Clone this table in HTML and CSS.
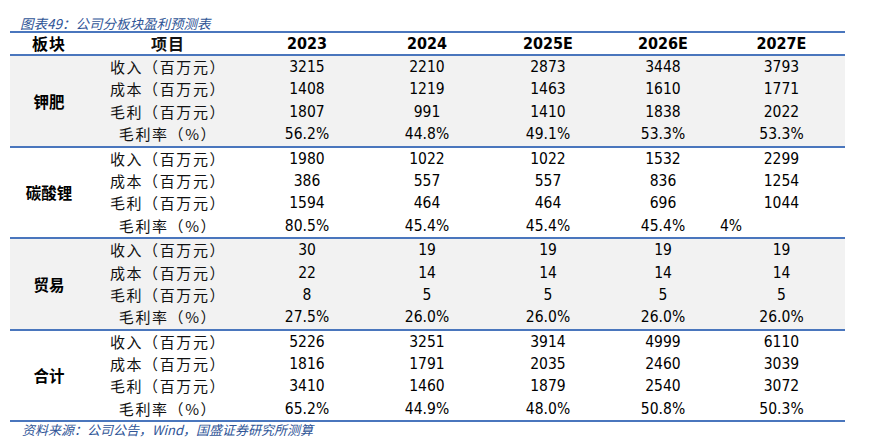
FILE: index.html
```html
<!DOCTYPE html>
<html lang="zh-CN">
<head>
<meta charset="utf-8">
<title>公司分板块盈利预测表</title>
<link rel="stylesheet" href="styles.css">
</head>
<body>
<div class="page">
  <div class="title">图表49：公司分板块盈利预测表</div>
  <div class="tbl">
    <div class="row head">
      <div class="c seg">板块</div>
      <div class="c lab">项目</div>
      <div class="c">2023</div>
      <div class="c">2024</div>
      <div class="c">2025E</div>
      <div class="c">2026E</div>
      <div class="c">2027E</div>
    </div>

    <div class="group shade">
      <div class="segname">钾肥</div>
      <div class="c lab">收入（百万元）</div><div class="c">3215</div><div class="c">2210</div><div class="c">2873</div><div class="c">3448</div><div class="c">3793</div>
      <div class="c lab">成本（百万元）</div><div class="c">1408</div><div class="c">1219</div><div class="c">1463</div><div class="c">1610</div><div class="c">1771</div>
      <div class="c lab">毛利（百万元）</div><div class="c">1807</div><div class="c">991</div><div class="c">1410</div><div class="c">1838</div><div class="c">2022</div>
      <div class="c lab">毛利率（%）</div><div class="c">56.2%</div><div class="c">44.8%</div><div class="c">49.1%</div><div class="c">53.3%</div><div class="c">53.3%</div>
    </div>

    <div class="group">
      <div class="segname">碳酸锂</div>
      <div class="c lab">收入（百万元）</div><div class="c">1980</div><div class="c">1022</div><div class="c">1022</div><div class="c">1532</div><div class="c">2299</div>
      <div class="c lab">成本（百万元）</div><div class="c">386</div><div class="c">557</div><div class="c">557</div><div class="c">836</div><div class="c">1254</div>
      <div class="c lab">毛利（百万元）</div><div class="c">1594</div><div class="c">464</div><div class="c">464</div><div class="c">696</div><div class="c">1044</div>
      <div class="c lab">毛利率（%）</div><div class="c">80.5%</div><div class="c">45.4%</div><div class="c">45.4%</div><div class="c">45.4%</div><div class="c left">4%</div>
    </div>

    <div class="group shade">
      <div class="segname">贸易</div>
      <div class="c lab">收入（百万元）</div><div class="c">30</div><div class="c">19</div><div class="c">19</div><div class="c">19</div><div class="c">19</div>
      <div class="c lab">成本（百万元）</div><div class="c">22</div><div class="c">14</div><div class="c">14</div><div class="c">14</div><div class="c">14</div>
      <div class="c lab">毛利（百万元）</div><div class="c">8</div><div class="c">5</div><div class="c">5</div><div class="c">5</div><div class="c">5</div>
      <div class="c lab">毛利率（%）</div><div class="c">27.5%</div><div class="c">26.0%</div><div class="c">26.0%</div><div class="c">26.0%</div><div class="c">26.0%</div>
    </div>

    <div class="group">
      <div class="segname">合计</div>
      <div class="c lab">收入（百万元）</div><div class="c">5226</div><div class="c">3251</div><div class="c">3914</div><div class="c">4999</div><div class="c">6110</div>
      <div class="c lab">成本（百万元）</div><div class="c">1816</div><div class="c">1791</div><div class="c">2035</div><div class="c">2460</div><div class="c">3039</div>
      <div class="c lab">毛利（百万元）</div><div class="c">3410</div><div class="c">1460</div><div class="c">1879</div><div class="c">2540</div><div class="c">3072</div>
      <div class="c lab">毛利率（%）</div><div class="c">65.2%</div><div class="c">44.9%</div><div class="c">48.0%</div><div class="c">50.8%</div><div class="c">50.3%</div>
    </div>
  </div>
  <div class="source">资料来源：公司公告，Wind，国盛证券研究所测算</div>
</div>
</body>
</html>
```
FILE: styles.css
```css
html, body {
  margin: 0;
  padding: 0;
  background: #ffffff;
}

.page {
  width: 874px;
  height: 439px;
  padding: 16px 0 0 10px;
  box-sizing: border-box;
  font-family: "DejaVu Sans Condensed", "DejaVu Sans", "Noto Sans CJK SC", sans-serif;
  color: #000;
}

.title {
  margin-left: 10px;
  height: 15px;
  line-height: 15px;
  font-family: "Noto Sans CJK SC", sans-serif;
  font-size: 13.5px;
  font-style: italic;
  color: #2f5597;
}

.tbl {
  width: 835px;
  border-top: 2px solid #4a76bd;
}

.row,
.group {
  display: grid;
  grid-template-columns: 78px 160px 118px 122px 120px 110px 127px;
}

.head {
  height: 21px;
  border-bottom: 2px solid #4a76bd;
  font-weight: bold;
  font-size: 16px;
}

.head .c {
  line-height: 21px;
}

.head .seg,
.head .lab {
  font-family: "Noto Sans CJK SC", sans-serif;
  font-weight: bold;
  font-size: 16px;
  letter-spacing: 1px;
}

.group {
  grid-template-rows: repeat(4, 22.4px);
  border-bottom: 2px solid #4a76bd;
  font-size: 15.5px;
}

.shade {
  background: #f2f2f2;
}

.c {
  text-align: center;
  line-height: 22.4px;
  white-space: nowrap;
}

.c.left {
  text-align: left;
  padding-left: 2px;
}

.lab {
  font-family: "Noto Sans CJK SC", sans-serif;
  font-size: 15px;
  letter-spacing: 1.6px;
  color: #111;
}

.segname {
  grid-column: 1;
  grid-row: 1 / 5;
  display: flex;
  align-items: center;
  justify-content: center;
  font-family: "Noto Sans CJK SC", sans-serif;
  font-weight: bold;
  font-size: 15.5px;
}

.source {
  margin-left: 12px;
  margin-top: 0;
  font-family: "Noto Sans CJK SC", sans-serif;
  font-size: 13px;
  line-height: 15px;
  font-style: italic;
  color: #2f5597;
}
```
